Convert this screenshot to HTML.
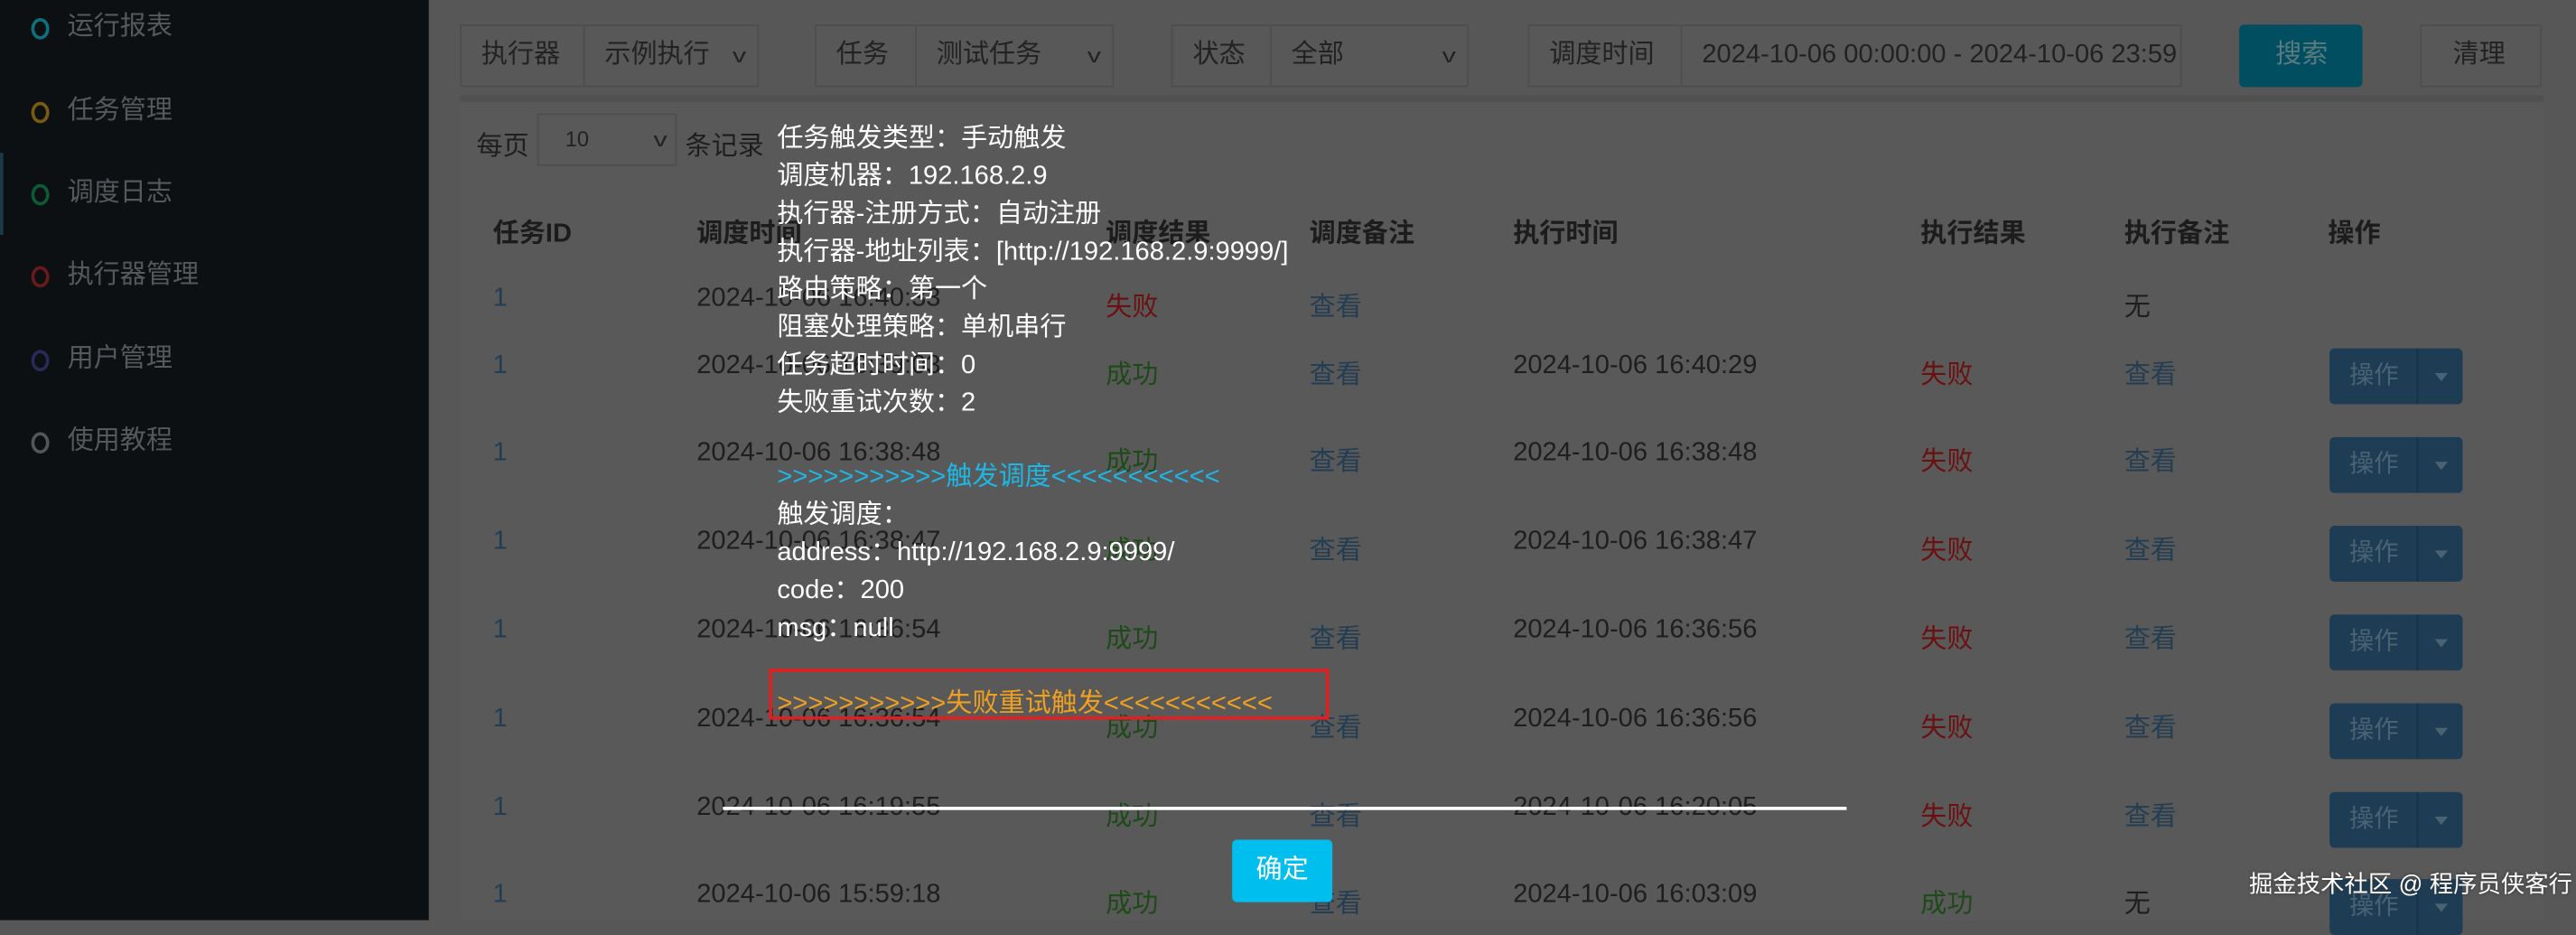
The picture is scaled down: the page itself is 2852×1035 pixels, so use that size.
<!DOCTYPE html>
<html><head><meta charset="utf-8"><style>
*{margin:0;padding:0;box-sizing:border-box}
html,body{width:2852px;height:1018px;overflow:hidden;background:#575757}
#s{position:absolute;left:0;top:0;width:1568px;height:560px;transform:scale(1.81888);transform-origin:0 0;font-family:"Liberation Sans","Noto Sans CJK SC",sans-serif;font-size:16px;color:#1e1e1e}
.a{position:absolute;white-space:nowrap}
.side{position:absolute;left:0;top:0;width:261px;height:560px;background:#0c1013}
.mi{position:absolute;left:41px;color:#55595c;font-size:16px;line-height:20px}
.ci{position:absolute;left:19px;width:11px;height:13px;border:2px solid;border-radius:50%}
.box{position:absolute;top:15px;height:38px;background:#585858;border:1px solid #4e4e4e;line-height:36px;padding-left:12px;color:#222;font-size:16px}
.ch{position:absolute;right:8px;top:0;font-size:12px;transform:scaleX(1.4)}
.th{position:absolute;top:128px;font-weight:bold;font-size:16px;color:#1c1c1c}
.r{color:#6b1010}.g{color:#1d4a18}.l{color:#233d52}
.op{position:absolute;left:1418px;width:81px;height:34px;background:#1e3d55;border-radius:3px;color:#4a6272;font-size:15px;line-height:34px;padding-left:12px}
.op i{position:absolute;left:53px;top:0;bottom:0;border-left:1px solid #163247}
.op b{position:absolute;left:64px;top:15px;border:4px solid transparent;border-top:5px solid #4a6272}
.w{position:absolute;left:473px;color:#fff;font-size:16px}
</style></head><body><div id="s">
<div class="side">
<div class="ci" style="top:11px;border-color:#0f6f7c"></div><div class="mi" style="top:7px">运行报表</div>
<div class="ci" style="top:62px;border-color:#7a5a10"></div><div class="mi" style="top:58px">任务管理</div>
<div style="position:absolute;left:0;top:93px;width:2px;height:50px;background:#1a3a4a"></div>
<div class="ci" style="top:112px;border-color:#0d5a35"></div><div class="mi" style="top:108px">调度日志</div>
<div class="ci" style="top:162px;border-color:#6a1a1a"></div><div class="mi" style="top:158px">执行器管理</div>
<div class="ci" style="top:213px;border-color:#2a2a5a"></div><div class="mi" style="top:209px">用户管理</div>
<div class="ci" style="top:263px;border-color:#555"></div><div class="mi" style="top:259px">使用教程</div>
</div>
<div class="box" style="left:280px;width:76px">执行器</div>
<div class="box" style="left:355px;width:107px;overflow:hidden">示例执行<span class="ch">v</span></div>
<div class="box" style="left:496px;width:62px">任务</div>
<div class="box" style="left:557px;width:121px;overflow:hidden">测试任务<span class="ch">v</span></div>
<div class="box" style="left:713px;width:61px">状态</div>
<div class="box" style="left:773px;width:121px">全部<span class="ch">v</span></div>
<div class="box" style="left:930px;width:94px">调度时间</div>
<div class="box" style="left:1023px;width:305px;overflow:hidden">2024-10-06 00:00:00 - 2024-10-06 23:59</div>
<div class="box" style="left:1363px;width:75px;background:#004e60;border-color:#004e60;color:#5a7a80;padding-left:21px;border-radius:3px">搜索</div>
<div class="box" style="left:1473px;width:74px;padding-left:19px">清理</div>
<div class="a" style="left:280px;top:58px;width:1268px;height:502px;background:#595959;border-top:4px solid #505050"></div>
<div class="a" style="left:290px;top:75px">每页</div>
<div class="a" style="left:327px;top:69px;width:85px;height:32px;border:1px solid #4e4e4e;line-height:30px;padding-left:16px;font-size:13px;color:#222">10<span class="ch" style="right:6px">v</span></div>
<div class="a" style="left:417px;top:75px">条记录</div>
<div class="th" style="left:300px">任务ID</div><div class="th" style="left:424px">调度时间</div><div class="th" style="left:673px">调度结果</div><div class="th" style="left:797px">调度备注</div><div class="th" style="left:921px">执行时间</div><div class="th" style="left:1169px">执行结果</div><div class="th" style="left:1293px">执行备注</div><div class="th" style="left:1417px">操作</div>

<div class="a l" style="left:300px;top:173px">1</div><div class="a" style="left:424px;top:173px">2024-10-06 16:40:33</div><div class="a r" style="left:673px;top:173px">失败</div><div class="a l" style="left:797px;top:173px">查看</div><div class="a" style="left:1293px;top:173px">无</div>

<div class="a l" style="left:300px;top:214px">1</div><div class="a" style="left:424px;top:214px">2024-10-06 16:39:03</div><div class="a g" style="left:673px;top:214px">成功</div><div class="a l" style="left:797px;top:214px">查看</div><div class="a" style="left:921px;top:214px">2024-10-06 16:40:29</div><div class="a r" style="left:1169px;top:214px">失败</div><div class="a l" style="left:1293px;top:214px">查看</div><div class="op" style="top:212px">操作<i></i><b></b></div>

<div class="a l" style="left:300px;top:267px">1</div><div class="a" style="left:424px;top:267px">2024-10-06 16:38:48</div><div class="a g" style="left:673px;top:267px">成功</div><div class="a l" style="left:797px;top:267px">查看</div><div class="a" style="left:921px;top:267px">2024-10-06 16:38:48</div><div class="a r" style="left:1169px;top:267px">失败</div><div class="a l" style="left:1293px;top:267px">查看</div><div class="op" style="top:266px">操作<i></i><b></b></div>

<div class="a l" style="left:300px;top:321px">1</div><div class="a" style="left:424px;top:321px">2024-10-06 16:38:47</div><div class="a g" style="left:673px;top:321px">成功</div><div class="a l" style="left:797px;top:321px">查看</div><div class="a" style="left:921px;top:321px">2024-10-06 16:38:47</div><div class="a r" style="left:1169px;top:321px">失败</div><div class="a l" style="left:1293px;top:321px">查看</div><div class="op" style="top:320px">操作<i></i><b></b></div>

<div class="a l" style="left:300px;top:375px">1</div><div class="a" style="left:424px;top:375px">2024-10-06 16:36:54</div><div class="a g" style="left:673px;top:375px">成功</div><div class="a l" style="left:797px;top:375px">查看</div><div class="a" style="left:921px;top:375px">2024-10-06 16:36:56</div><div class="a r" style="left:1169px;top:375px">失败</div><div class="a l" style="left:1293px;top:375px">查看</div><div class="op" style="top:374px">操作<i></i><b></b></div>

<div class="a l" style="left:300px;top:429px">1</div><div class="a" style="left:424px;top:429px">2024-10-06 16:36:54</div><div class="a g" style="left:673px;top:429px">成功</div><div class="a l" style="left:797px;top:429px">查看</div><div class="a" style="left:921px;top:429px">2024-10-06 16:36:56</div><div class="a r" style="left:1169px;top:429px">失败</div><div class="a l" style="left:1293px;top:429px">查看</div><div class="op" style="top:428px">操作<i></i><b></b></div>

<div class="a l" style="left:300px;top:483px">1</div><div class="a" style="left:424px;top:483px">2024-10-06 16:19:55</div><div class="a g" style="left:673px;top:483px">成功</div><div class="a l" style="left:797px;top:483px">查看</div><div class="a" style="left:921px;top:483px">2024-10-06 16:20:05</div><div class="a r" style="left:1169px;top:483px">失败</div><div class="a l" style="left:1293px;top:483px">查看</div><div class="op" style="top:482px">操作<i></i><b></b></div>

<div class="a l" style="left:300px;top:536px">1</div><div class="a" style="left:424px;top:536px">2024-10-06 15:59:18</div><div class="a g" style="left:673px;top:536px">成功</div><div class="a l" style="left:797px;top:536px">查看</div><div class="a" style="left:921px;top:536px">2024-10-06 16:03:09</div><div class="a g" style="left:1169px;top:536px">成功</div><div class="a" style="left:1293px;top:536px">无</div><div class="op" style="top:535px">操作<i></i><b></b></div>

<div class="w" style="top:70px">任务触发类型：手动触发</div>
<div class="w" style="top:93px">调度机器：192.168.2.9</div>
<div class="w" style="top:116px">执行器-注册方式：自动注册</div>
<div class="w" style="top:139px">执行器-地址列表：[http://192.168.2.9:9999/]</div>
<div class="w" style="top:162px">路由策略：第一个</div>
<div class="w" style="top:185px">阻塞处理策略：单机串行</div>
<div class="w" style="top:208px">任务超时时间：0</div>
<div class="w" style="top:231px">失败重试次数：2</div>
<div class="w" style="top:276px;color:#1eb6e4">&gt;&gt;&gt;&gt;&gt;&gt;&gt;&gt;&gt;&gt;&gt;触发调度&lt;&lt;&lt;&lt;&lt;&lt;&lt;&lt;&lt;&lt;&lt;</div>
<div class="w" style="top:299px">触发调度：</div>
<div class="w" style="top:322px">address：http://192.168.2.9:9999/</div>
<div class="w" style="top:345px">code：200</div>
<div class="w" style="top:368px">msg：null</div>
<div class="w" style="top:414px;color:#f0a020">&gt;&gt;&gt;&gt;&gt;&gt;&gt;&gt;&gt;&gt;&gt;失败重试触发&lt;&lt;&lt;&lt;&lt;&lt;&lt;&lt;&lt;&lt;&lt;</div>
<div class="a" style="left:468px;top:407px;width:341px;height:31px;border:2px solid #e02020"></div>
<div class="a" style="left:440px;top:491px;width:684px;height:2px;background:#fff"></div>
<div class="a" style="left:750px;top:511px;width:61px;height:38px;background:#00bfee;border-radius:3px;color:#fff;font-size:16px;line-height:38px;text-align:center">确定</div>
<div class="a" style="left:1369px;top:527px;color:#fff;font-size:14.5px;text-shadow:0 0 2px #333">掘金技术社区 @ 程序员侠客行</div>
</div></body></html>
